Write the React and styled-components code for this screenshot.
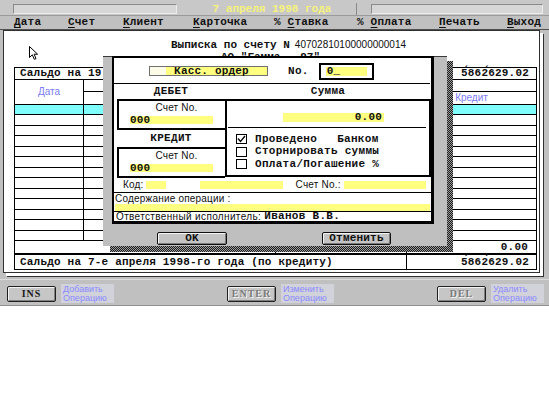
import React from "react";
import styled, { createGlobalStyle } from "styled-components";

const MONO = `"Liberation Mono", "DejaVu Sans Mono", monospace`;
const SANS = `"Liberation Sans", Arial, sans-serif`;
const SERIF = `"Liberation Serif", "Times New Roman", serif`;

const Global = createGlobalStyle`
  html, body { margin: 0; padding: 0; background: #ffffff; }
  body { font-family: ${MONO}; color: #101010; }
  * { box-sizing: border-box; }
`;

const Screen = styled.div`
  position: relative;
  width: 549px;
  height: 418px;
  background: #fff;
  overflow: hidden;
`;

const Desktop = styled.div`
  display: flex;
  flex-direction: column;
  background: #c0c0c0;
`;

const TopBar = styled.div`
  display: flex;
  align-items: center;
  height: 15px;
  padding: 3px 0 0 13px;
  background: #c8c8c8;
`;

const Sunken = styled.div`
  width: ${(p) => p.$w}px;
  height: 10px;
  background: #d6d6d6;
  border-top: 1px solid #8a8a8a;
  border-left: 1px solid #8a8a8a;
  border-right: 1px solid #ececec;
  border-bottom: 1px solid #ececec;
`;

const DateBox = styled.div`
  width: 177px;
  height: 12px;
  margin: 0 14px 0 3px;
  padding-left: 8px;
  display: flex;
  align-items: center;
  justify-content: center;
  font: bold 11px/1 ${MONO};
  color: #f6f27c;
  border-right: 1px solid #8a8a8a;
`;

const MenuBar = styled.div`
  display: grid;
  grid-template-columns: 54px 55px 70px 81px 83px 82px 68px auto;
  align-items: center;
  height: 15px;
  padding-left: 14px;
  border-top: 1px solid #9a9a9a;
  border-bottom: 1px solid #505050;
  font: bold 11px/1 ${MONO};
  letter-spacing: 0.2px;
  white-space: pre;
`;

const Hot = styled.span`
  text-decoration: underline;
  text-underline-offset: 2px;
`;

const WorkArea = styled.div`
  height: 249px;
  padding-left: 3px;
`;

const MainWindow = styled.div`
  width: 537px;
  height: 243px;
  background: #fff;
  border: 1px solid #303030;
  box-shadow: 3px 3px 0 0 #fff, 4px 4px 0 0 #303030;
  display: flex;
  flex-direction: column;
`;

const TitleRow = styled.div`
  display: flex;
  align-items: baseline;
  height: 12px;
  margin-top: 8px;
  padding-left: 167px;
  font: bold 11px/12px ${MONO};
  white-space: pre;
`;

const AccountNo = styled.span`
  font: 10px/12px ${SANS};
  margin-left: 5px;
`;

const SubTitle = styled.div`
  height: 12px;
  padding-left: 217px;
  font: bold 11px/12px ${MONO};
  white-space: pre;
`;

const Table = styled.div`
  margin: 4px 0 0 10px;
  width: 523px;
  border: 1px solid #000;
  display: flex;
  flex-direction: column;
`;

const Row = styled.div`
  display: grid;
  grid-template-columns: 68px 192px 131px 1fr;
  height: ${(p) => p.$h}px;
  border-bottom: ${(p) => (p.$last ? "none" : `${p.$bw || 1}px solid #000`)};
  background: ${(p) => p.$bg || "transparent"};
`;

const Cell = styled.div`
  grid-column: span ${(p) => p.$span || 1};
  border-left: ${(p) => (p.$first ? "none" : "1px solid #000")};
  display: flex;
  align-items: ${(p) => p.$valign || "center"};
  justify-content: ${(p) => p.$align || "flex-start"};
  padding: 0 ${(p) => p.$pr || 0}px 0 ${(p) => p.$pl || 0}px;
  font: bold 11px/1 ${MONO};
  letter-spacing: 0.2px;
  white-space: pre;
`;

const HeaderRow = styled.div`
  display: grid;
  grid-template-columns: 68px 192px 131px 1fr;
  grid-template-rows: 12px 12px;
  height: 25px;
  border-bottom: 1px solid #000;
`;

const HeadCell = styled.div`
  grid-column: ${(p) => p.$col};
  grid-row: ${(p) => p.$row};
  border-left: ${(p) => (p.$col === 1 ? "none" : "1px solid #000")};
  border-bottom: ${(p) => (p.$split ? "1px solid #000" : "none")};
  display: flex;
  align-items: center;
  justify-content: center;
  font: 10px/1 ${SANS};
  color: #7b7bf2;
`;

/* ---------- dialog ---------- */

const Dialog = styled.div`
  position: absolute;
  left: 103px;
  top: 56px;
  width: 344px;
  height: 190px;
  background: #bfbfbf;
  border-top: 1px solid #3a3a3a;
  display: flex;
  flex-direction: column;

  &::before,
  &::after {
    content: "";
    position: absolute;
    background: repeating-conic-gradient(#1c1c1c 0% 25%, #9c9c9c 0% 50%) 0 0 / 2px 2px;
  }
  &::before {
    left: 100%;
    top: 4px;
    width: 6px;
    height: calc(100% + 2px);
  }
  &::after {
    top: 100%;
    left: 7px;
    width: calc(100% - 7px);
    height: 6px;
  }
`;

const Panel = styled.div`
  margin: -1px 13px 0 9px;
  height: 168px;
  background: #fff;
  border: 2px solid #000;
  border-right-width: 3px;
  border-bottom-width: 3px;
  display: flex;
  flex-direction: column;
`;

const PanelHead = styled.div`
  display: flex;
  align-items: center;
  height: 26px;
  padding: 1px 0 0 35px;
  border-bottom: 1px solid #000;
  margin-right: 1px;
`;

const YellowField = styled.div`
  width: ${(p) => p.$w}px;
  height: ${(p) => p.$h || 9}px;
  margin-left: ${(p) => p.$ml || 0}px;
  background: #ffff80;
  display: flex;
  align-items: center;
  justify-content: ${(p) => p.$align || "flex-start"};
  padding: 0 ${(p) => p.$pr || 0}px 0 ${(p) => p.$pl || 0}px;
  font: bold 11px/1 ${MONO};
  letter-spacing: 0.2px;
  white-space: pre;
`;

const OrderField = styled.div`
  width: 119px;
  height: 10px;
  border: 1px solid #707070;
  background: linear-gradient(to right, #fbfbe8 0 16px, #ffff80 16px);
  display: flex;
  align-items: center;
  justify-content: center;
  padding-left: 6px;
  font: bold 11px/1 ${MONO};
  letter-spacing: 0.2px;
  white-space: pre;
`;

const Label = styled.span`
  font: bold 11px/1 ${MONO};
  letter-spacing: 0.3px;
  margin-left: ${(p) => p.$ml || 0}px;
  white-space: pre;
`;

const NoBox = styled.div`
  width: 55px;
  height: 17px;
  margin-left: 10px;
  border: 2px solid #000;
  display: flex;
  align-items: center;
  padding-left: 5px;
`;

const Middle = styled.div`
  display: grid;
  grid-template-columns: 108px 1fr;
  height: 94px;
  padding-left: 3px;
`;

const Column = styled.div`
  display: flex;
  flex-direction: column;
`;

const Caption = styled.div`
  height: ${(p) => p.$h}px;
  display: flex;
  align-items: center;
  justify-content: center;
  font: bold 11px/1 ${MONO};
  letter-spacing: 0.3px;
`;

const AccountBox = styled.div`
  height: ${(p) => p.$h}px;
  border: 2px solid #000;
  border-right: none;
  display: flex;
  flex-direction: column;
  align-items: flex-start;
  padding: ${(p) => p.$pt}px 0 0 9px;
`;

const SmallSans = styled.div`
  font: 10px/1 ${SANS};
  letter-spacing: 0.2px;
  white-space: pre;
  align-self: ${(p) => p.$self || "auto"};
  margin: ${(p) => p.$m || "0"};
`;

const SumBox = styled.div`
  height: 78px;
  width: 206px;
  border: 2px solid #000;
  display: flex;
  flex-direction: column;
  padding-top: 12px;
`;

const Divider = styled.div`
  height: 1px;
  background: #000;
  margin: ${(p) => p.$m};
`;

const CheckRow = styled.div`
  display: flex;
  align-items: center;
  height: ${(p) => p.$h}px;
  margin-top: ${(p) => p.$mt || 0}px;
  padding-left: 9px;
`;

const CheckBox = styled.div`
  width: 11px;
  height: 10px;
  border: 1px solid #000;
  background: #fff;
  margin-right: 8px;
  display: flex;
  align-items: center;
  justify-content: center;
`;

const CodeRow = styled.div`
  display: flex;
  align-items: center;
  height: 15px;
  padding-left: 9px;
  border-bottom: 1px solid #000;
`;

const Block = styled.div`
  display: flex;
  flex-direction: column;
  padding: 0 1px;
  height: 19px;
  border-bottom: 1px solid #000;
`;

const Responsible = styled.div`
  display: flex;
  align-items: center;
  height: 9px;
  padding-left: 2px;
  font: 10px/1 ${SANS};
  letter-spacing: 0.35px;
  white-space: pre;
`;

const ButtonRow = styled.div`
  display: flex;
  gap: 95px;
  padding: 8px 0 0 54px;
`;

const DlgButton = styled.div`
  width: ${(p) => p.$w}px;
  height: 13px;
  background: #c4c4c4;
  border: 1px solid #111;
  border-radius: 2px;
  box-shadow: inset 1px 1px 0 #f2f2f2, inset -1px -1px 0 #7a7a7a;
  display: flex;
  align-items: center;
  justify-content: center;
  font: bold 11px/1 ${MONO};
  letter-spacing: 0.2px;
`;

/* ---------- bottom key bar ---------- */

const ButtonBar = styled.div`
  display: grid;
  grid-template-columns: 220px 210px auto;
  height: 27px;
  padding: 4px 0 0 7px;
  border-top: 1px solid #dcdcdc;
  border-bottom: 1px solid #909090;
`;

const KeyGroup = styled.div`
  display: flex;
  align-items: center;
  gap: 5px;
  height: 19px;
`;

const KeyButton = styled.div`
  width: 49px;
  height: 16px;
  display: flex;
  align-items: center;
  justify-content: center;
  background: #c6c6c6;
  border: 1px solid #202020;
  border-radius: 2px;
  box-shadow: inset 1px 1px 0 #f4f4f4, inset -1px -1px 0 #808080;
  font: bold 10px/1 ${SERIF};
  letter-spacing: 1px;
  color: ${(p) => (p.$dim ? "#7a7a7a" : "#1a1a1a")};
  text-shadow: ${(p) => (p.$dim ? "1px 1px 0 #f4f4f4" : "none")};
`;

const KeyHint = styled.div`
  width: 53px;
  height: 19px;
  background: #d2d2da;
  padding: 1px 2px;
  font: 9px/9px ${SANS};
  color: #8a8aff;
`;

const Cursor = styled.svg`
  position: absolute;
  left: 29px;
  top: 46px;
`;

const menu = [
  [null, "Д", "ата"],
  [null, "С", "чет"],
  [null, "К", "лиент"],
  [null, "К", "арточка"],
  ["% ", "С", "тавка"],
  ["% ", "О", "плата"],
  [null, "П", "ечать"],
  [null, "В", "ыход"],
];

const dataRows = [10, 11, 10, 11, 10, 11, 10, 11, 10, 11, 10, 11, 10];

export default function App() {
  return (
    <Screen>
      <Global />
      <Desktop>
        <TopBar>
          <Sunken $w={164} />
          <DateBox>7 апреля 1998 года</DateBox>
          <Sunken $w={172} />
        </TopBar>
        <MenuBar>
          {menu.map(([pre, hot, rest], i) => (
            <span key={i}>
              {pre}
              <Hot>{hot}</Hot>
              {rest}
            </span>
          ))}
        </MenuBar>
        <WorkArea>
          <MainWindow>
            <TitleRow>
              Выписка по счету N<AccountNo>40702810100000000014</AccountNo>
            </TitleRow>
            <SubTitle>АО "Гамма - 97"</SubTitle>
            <Table>
              <Row $h={12}>
                <Cell $first $span={3} $pl={5}>Сальдо на 19</Cell>
                <Cell $align="flex-end" $pr={7}>5&#769;862&#769;629.02</Cell>
              </Row>
              <HeaderRow>
                <HeadCell $col={1} $row="1 / span 2">Дата</HeadCell>
                <HeadCell $col={2} $row={1} $split />
                <HeadCell $col={3} $row={1} $split />
                <HeadCell $col={4} $row={1} $split />
                <HeadCell $col={2} $row={2} />
                <HeadCell $col={3} $row={2} />
                <HeadCell $col={4} $row={2}>Кредит</HeadCell>
              </HeaderRow>
              {dataRows.map((h, i) => (
                <Row key={i} $h={h} $bg={i === 0 ? "#80ffff" : undefined}>
                  <Cell $first />
                  <Cell />
                  <Cell />
                  <Cell />
                </Row>
              ))}
              <Row $h={14} $bw={2}>
                <Cell $first $span={2} />
                <Cell $align="flex-end" $valign="flex-end" $pr={8}>0.00</Cell>
                <Cell $align="flex-end" $pr={8}>0.00</Cell>
              </Row>
              <Row $h={14} $last>
                <Cell $first $span={3} $pl={5}>
                  Сальдо на 7-е апреля 1998-го года (по кредиту)
                </Cell>
                <Cell $align="flex-end" $pr={7}>5&#769;862&#769;629.02</Cell>
              </Row>
            </Table>
          </MainWindow>
        </WorkArea>
        <ButtonBar>
          <KeyGroup>
            <KeyButton>INS</KeyButton>
            <KeyHint>Добавить<br />Операцию</KeyHint>
          </KeyGroup>
          <KeyGroup>
            <KeyButton $dim>ENTER</KeyButton>
            <KeyHint>Изменить<br />Операцию</KeyHint>
          </KeyGroup>
          <KeyGroup>
            <KeyButton $dim>DEL</KeyButton>
            <KeyHint>Удалить<br />Операцию</KeyHint>
          </KeyGroup>
        </ButtonBar>
      </Desktop>

      <Dialog>
        <Panel>
          <PanelHead>
            <OrderField>Касс. ордер</OrderField>
            <Label $ml={20}>No.</Label>
            <NoBox>
              <YellowField $w={41} $pl={1}>0_</YellowField>
            </NoBox>
          </PanelHead>
          <Middle>
            <Column>
              <Caption $h={15}>ДЕБЕТ</Caption>
              <AccountBox $h={31} $pt={2}>
                <SmallSans $self="center" $m="0 0 3px 0">Счет No.</SmallSans>
                <YellowField $w={83} $h={8} $ml={2}>000</YellowField>
              </AccountBox>
              <Caption $h={17}>КРЕДИТ</Caption>
              <AccountBox $h={31} $pt={2}>
                <SmallSans $self="center" $m="0 0 3px 0">Счет No.</SmallSans>
                <YellowField $w={83} $h={8} $ml={2}>000</YellowField>
              </AccountBox>
            </Column>
            <Column>
              <Caption $h={15}>Сумма</Caption>
              <SumBox>
                <YellowField $w={101} $ml={56} $align="flex-end" $pr={2}>0.00</YellowField>
                <Divider $m="5px 3px 0 1px" />
                <CheckRow $h={12} $mt={5}>
                  <CheckBox>
                    <svg width="9" height="8" viewBox="0 0 9 8">
                      <polyline points="1,3.5 3.5,6.5 8,1" fill="none" stroke="#000" strokeWidth="1.3" />
                    </svg>
                  </CheckBox>
                  <Label>Проведено</Label>
                  <Label $ml={20}>Банком</Label>
                </CheckRow>
                <CheckRow $h={13}>
                  <CheckBox />
                  <Label>Сторнировать суммы</Label>
                </CheckRow>
                <CheckRow $h={12}>
                  <CheckBox />
                  <Label>Оплата/Погашение %</Label>
                </CheckRow>
              </SumBox>
            </Column>
          </Middle>
          <CodeRow>
            <SmallSans>Код:</SmallSans>
            <YellowField $w={20} $h={8} $ml={2} />
            <YellowField $w={83} $h={8} $ml={34} />
            <SmallSans $m="0 0 0 13px">Счет No.:</SmallSans>
            <YellowField $w={82} $h={8} $ml={3} />
          </CodeRow>
          <Block>
            <SmallSans $m="1px 0 0 0">Содержание операции :</SmallSans>
            <YellowField $w={315} $h={8} $ml={0} />
          </Block>
          <Responsible>
            Ответственный исполнитель: <Label>Иванов В.В.</Label>
          </Responsible>
        </Panel>
        <ButtonRow>
          <DlgButton $w={70}>OK</DlgButton>
          <DlgButton $w={69}>Отменить</DlgButton>
        </ButtonRow>
      </Dialog>

      <Cursor width="10" height="15" viewBox="0 0 10 15">
        <path d="M0.5 0.5 V11.5 L3.3 8.8 L5.3 13.3 L7 12.6 L5.1 8.2 H8.6 Z" fill="#fff" stroke="#000" strokeWidth="1" />
      </Cursor>
    </Screen>
  );
}
